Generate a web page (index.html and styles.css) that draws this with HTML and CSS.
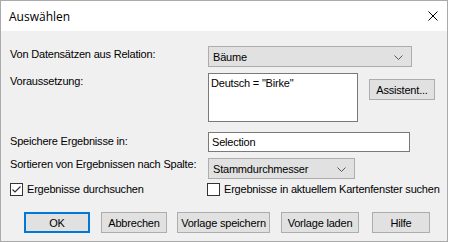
FILE: index.html
```html
<!DOCTYPE html>
<html lang="de">
<head>
    <meta charset="UTF-8">
    <title>Auswählen</title>
    <link rel="stylesheet" href="styles.css">
</head>
<body>
    <div class="window">
        <div class="titlebar">
            <span class="title">Auswählen</span>
            <span class="close">
                <svg width="10" height="10" viewBox="0 0 10 10"><path d="M0.5 0.5 L9.5 9.5 M9.5 0.5 L0.5 9.5" stroke="#000" stroke-width="1" fill="none"/></svg>
            </span>
        </div>
        <div class="content">
            <!-- Relation -->
            <div class="row row-relation">
                <span class="label">Von Datensätzen aus Relation:</span>
                <div class="combo combo-relation">
                    <span>Bäume</span>
                    <svg class="chevron" width="9" height="5" viewBox="0 0 9 5"><path d="M0.5 0.5 L4.5 4.5 L8.5 0.5" stroke="#555" fill="none"/></svg>
                </div>
            </div>

            <!-- Voraussetzung -->
            <div class="row row-condition">
                <span class="label">Voraussetzung:</span>
                <div class="textarea">Deutsch = "Birke"</div>
                <button class="btn btn-assist">Assistent...</button>
            </div>

            <!-- Ergebnisse -->
            <div class="row row-save">
                <span class="label">Speichere Ergebnisse in:</span>
                <div class="input">Selection</div>
            </div>

            <div class="row row-sort">
                <span class="label">Sortieren von Ergebnissen nach Spalte:</span>
                <div class="combo combo-sort">
                    <span>Stammdurchmesser</span>
                    <svg class="chevron" width="9" height="5" viewBox="0 0 9 5"><path d="M0.5 0.5 L4.5 4.5 L8.5 0.5" stroke="#555" fill="none"/></svg>
                </div>
            </div>

            <div class="row row-checks">
                <label class="check check-left">
                    <span class="box">
                        <svg width="11" height="11" viewBox="0 0 11 11"><path d="M1.5 5.5 L4 8 L9.5 2.5" stroke="#333" stroke-width="1.2" fill="none"/></svg>
                    </span>
                    Ergebnisse durchsuchen
                </label>
                <label class="check">
                    <span class="box"></span>
                    Ergebnisse in aktuellem Kartenfenster suchen
                </label>
            </div>

            <div class="buttons">
                <button class="btn btn-ok">OK</button>
                <button class="btn btn-cancel">Abbrechen</button>
                <button class="btn btn-save">Vorlage speichern</button>
                <button class="btn btn-load">Vorlage laden</button>
                <button class="btn btn-help">Hilfe</button>
            </div>
        </div>
    </div>
</body>
</html>
```

FILE: styles.css
```css
body {
    margin: 0;
    background-color: #ffffff;
    font-family: "Liberation Sans", Arial, sans-serif;
    font-size: 11px;
    letter-spacing: -0.2px;
    color: #000;
}
.window {
    width: 448px;
    height: 242px;
    box-sizing: border-box;
    border: 1px solid #aaaaaa;
    background-color: #f0f0f0;
    display: flex;
    flex-direction: column;
}
.titlebar {
    height: 30px;
    background-color: #ffffff;
    display: flex;
    align-items: center;
    padding-left: 8px;
    padding-right: 9px;
}
.title {
    font-family: "Open Sans", "Noto Sans", sans-serif;
    font-size: 12px;
    letter-spacing: 0;
    flex: 1;
}
.close {
    display: flex;
}
.content {
    padding: 15px 0 0 9px;
    line-height: 13px;
}
.row {
    display: flex;
    align-items: flex-start;
}
.label {
    width: 198px;
    padding-top: 2px;
    white-space: nowrap;
}
.combo {
    box-sizing: border-box;
    height: 21px;
    border: 1px solid #adadad;
    background-color: #e1e1e1;
    display: flex;
    align-items: center;
    padding: 1px 0 0 4px;
}
.combo span {
    flex: 1;
}
.chevron {
    margin-right: 8px;
}
.combo-relation {
    width: 204px;
}
.row-condition {
    margin-top: 6px;
}
.textarea {
    box-sizing: border-box;
    width: 150px;
    height: 49px;
    border: 1px solid #7a7a7a;
    background-color: #ffffff;
    padding: 3px 2px;
}
.btn {
    box-sizing: border-box;
    height: 21px;
    border: 1px solid #adadad;
    background-color: #e1e1e1;
    font-family: "Liberation Sans", Arial, sans-serif;
    font-size: 11px;
    letter-spacing: -0.2px;
    padding: 0;
    color: #000;
}
.btn-assist {
    width: 66px;
    margin-left: 11px;
    margin-top: 6px;
}
.row-save {
    margin-top: 10px;
}
.row-save .label {
    padding-top: 3px;
}
.input {
    box-sizing: border-box;
    width: 202px;
    height: 20px;
    border: 1px solid #7a7a7a;
    background-color: #ffffff;
    padding: 3px 3px;
}
.row-sort {
    margin-top: 6px;
}
.row-sort .label {
    padding-top: 0;
}
.combo-sort {
    width: 147px;
}
.row-checks {
    margin-top: 4px;
}
.check {
    display: flex;
    align-items: center;
    gap: 4px;
    white-space: nowrap;
}
.check-left {
    width: 197px;
}
.box {
    box-sizing: border-box;
    width: 13px;
    height: 13px;
    border: 1px solid #333333;
    background-color: #ffffff;
    display: flex;
    align-items: center;
    justify-content: center;
}
.buttons {
    display: flex;
    margin-top: 16px;
    padding-left: 14px;
}
.btn-ok {
    width: 66px;
    border: 2px solid #0078d7;
}
.btn-cancel {
    width: 66px;
    margin-left: 11px;
}
.btn-save {
    width: 93px;
    margin-left: 10px;
}
.btn-load {
    width: 78px;
    margin-left: 11px;
}
.btn-help {
    width: 58px;
    margin-left: 13px;
}
```
